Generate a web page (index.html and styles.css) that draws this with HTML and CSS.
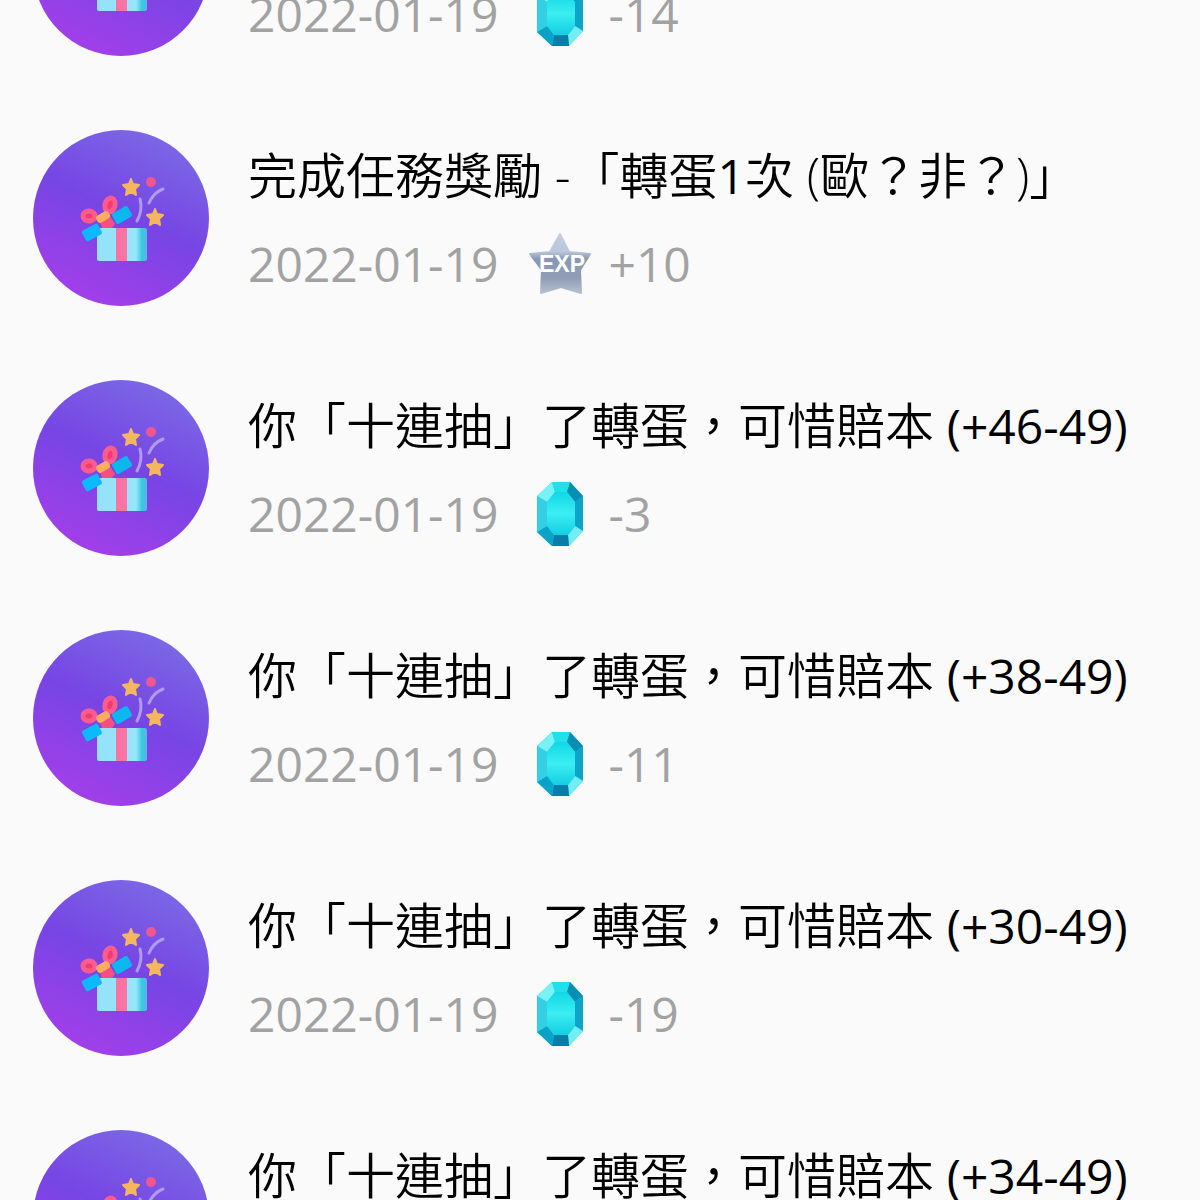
FILE: index.html
```html
<!DOCTYPE html>
<html lang="zh-Hant">
<head>
<meta charset="utf-8">
<meta name="viewport" content="width=device-width, initial-scale=1">
<title>轉蛋紀錄</title>
<link rel="stylesheet" href="styles.css">
</head>
<body>
<svg class="defs" aria-hidden="true">
  <defs>
    <linearGradient id="box-fill" x1="0" x2="1" y1="0" y2="0">
      <stop offset="0" stop-color="#93e2fb"/><stop offset=".78" stop-color="#99e5fb"/><stop offset=".9" stop-color="#35c8de"/><stop offset="1" stop-color="#5bb5ee"/>
    </linearGradient>
    <linearGradient id="exp-fill" x1="0" x2="0" y1="0" y2="1">
      <stop offset="0" stop-color="#c3cee0"/><stop offset=".3" stop-color="#bac7da"/><stop offset=".42" stop-color="#8998b2"/><stop offset=".75" stop-color="#909db4"/><stop offset="1" stop-color="#b4bfd0"/>
    </linearGradient>
    <linearGradient id="gem-fill" x1="0" x2="0" y1="0" y2="1">
      <stop offset="0" stop-color="#10d8e6"/><stop offset=".5" stop-color="#3beef2"/><stop offset="1" stop-color="#14cfe2"/>
    </linearGradient>
    <symbol id="gift" viewBox="0 0 176 176">
      <rect x="64" y="98" width="50" height="33" rx="2" fill="url(#box-fill)"/>
      <rect x="83" y="98" width="11" height="33" fill="#fb73a3"/>
      <rect x="-8" y="-6" width="18" height="12" rx="2" transform="translate(58 103) rotate(-28)" fill="#0cb9fb"/>
      <rect x="-9" y="-6" width="18" height="12" rx="2" transform="translate(89 85) rotate(-30)" fill="#0bb8ee"/>
      <path d="M67 92 77 86 82 94 79 98H69Z" fill="#f64f83"/>
      <ellipse cx="56" cy="86" rx="6" ry="5" fill="#f03a72" stroke="#ff5c8d" stroke-width="5"/>
      <ellipse cx="77" cy="75" rx="5" ry="7" fill="#f03a72" stroke="#ff5c8d" stroke-width="5" transform="rotate(15 77 75)"/>
      <rect x="-7" y="-4" width="14" height="8" rx="3" transform="translate(70 87) rotate(-30)" fill="#ffac60"/>
      <path id="spark" d="m98 49 2 5 6 1-4 4 1 6-5-3-5 3 1-6-4-4 6-1Z" fill="#f5b75e" stroke="#f5b75e" stroke-width="2" stroke-linejoin="round"/>
      <use href="#spark" x="24" y="30"/>
      <circle cx="118" cy="52" r="5" fill="#ef5790"/>
      <path d="M107 69Q110 80 104 91M116 73Q120 63 130 59" fill="none" stroke="#b19bf0" stroke-width="3" stroke-linecap="round"/>
    </symbol>
    <symbol id="exp" viewBox="0 0 64 64">
      <path d="m32 2 9 18 21 2-10 16 1 23-20-6-20 6 1-23L2 22l20-2Z" fill="url(#exp-fill)" stroke="url(#exp-fill)" stroke-width="2" stroke-linejoin="round"/>
      <text x="34" y="40" class="exp-label">EXP</text>
    </symbol>
    <symbol id="gem" viewBox="0 0 64 64">
      <path d="M24 0h18l13 14v35L41 64H24L9 50V14Z" fill="#20c8df"/>
      <path d="M24 0 9 14l10 6 8-10Z" fill="#79f2f7"/>
      <path d="M24 0h18l-3 10H27Z" fill="#22e0e9"/>
      <path d="m42 0 13 14-8 6-8-10Z" fill="#078fb3"/>
      <path d="M55 14v35l-8-5V20Z" fill="#0ca5c9"/>
      <path d="m55 49-14 15-1-11 7-9Z" fill="#72edf4"/>
      <path d="M41 64H24l2-11h14Z" fill="#087daa"/>
      <path d="M24 64 9 50l10-6 7 9Z" fill="#0aa2c8"/>
      <path d="M9 50V14l10 6v24Z" fill="#35cfe5"/>
      <path d="M27 10h12l8 10v24l-7 9H26l-7-9V20Z" fill="url(#gem-fill)"/>
    </symbol>
  </defs>
</svg>
<main>
  <ul class="history">
    <li class="entry">
      <span class="avatar"><svg class="gift"><use href="#gift"/></svg></span>
      <div class="body">
        <p class="title">你「十連抽」了轉蛋，可惜賠本 <span class="score">(+35-49)</span></p>
        <p class="meta"><time datetime="2022-01-19">2022-01-19</time><svg class="icon"><use href="#gem"/></svg><span>-14</span></p>
      </div>
    </li>
    <li class="entry">
      <span class="avatar"><svg class="gift"><use href="#gift"/></svg></span>
      <div class="body">
        <p class="title">完成任務獎勵 -「轉蛋<span class="score">1</span>次 (歐？非？)」</p>
        <p class="meta"><time datetime="2022-01-19">2022-01-19</time><svg class="icon"><use href="#exp"/></svg><span>+10</span></p>
      </div>
    </li>
    <li class="entry">
      <span class="avatar"><svg class="gift"><use href="#gift"/></svg></span>
      <div class="body">
        <p class="title">你「十連抽」了轉蛋，可惜賠本 <span class="score">(+46-49)</span></p>
        <p class="meta"><time datetime="2022-01-19">2022-01-19</time><svg class="icon"><use href="#gem"/></svg><span>-3</span></p>
      </div>
    </li>
    <li class="entry">
      <span class="avatar"><svg class="gift"><use href="#gift"/></svg></span>
      <div class="body">
        <p class="title">你「十連抽」了轉蛋，可惜賠本 <span class="score">(+38-49)</span></p>
        <p class="meta"><time datetime="2022-01-19">2022-01-19</time><svg class="icon"><use href="#gem"/></svg><span>-11</span></p>
      </div>
    </li>
    <li class="entry">
      <span class="avatar"><svg class="gift"><use href="#gift"/></svg></span>
      <div class="body">
        <p class="title">你「十連抽」了轉蛋，可惜賠本 <span class="score">(+30-49)</span></p>
        <p class="meta"><time datetime="2022-01-19">2022-01-19</time><svg class="icon"><use href="#gem"/></svg><span>-19</span></p>
      </div>
    </li>
    <li class="entry">
      <span class="avatar"><svg class="gift"><use href="#gift"/></svg></span>
      <div class="body">
        <p class="title">你「十連抽」了轉蛋，可惜賠本 <span class="score">(+34-49)</span></p>
        <p class="meta"><time datetime="2022-01-19">2022-01-19</time><svg class="icon"><use href="#gem"/></svg><span>-15</span></p>
      </div>
    </li>
  </ul>
</main>
</body>
</html>
```
FILE: styles.css
```css
* {
  box-sizing: border-box;
}

body {
  margin: 0;
  background: #fafafa;
  color: #000;
  font-family: "Open Sans", "Noto Sans CJK TC", sans-serif;
  font-weight: 350;
}

main {
  height: 100vh;
  overflow: hidden;
}

.defs {
  display: block;
  width: 0;
  height: 0;
}

/* The list is scrolled part of the way through its first entry. */
.history {
  display: flex;
  flex-direction: column;
  gap: 74px;
  margin: -120px 0 0;
  padding: 0 33px;
  list-style: none;
}

.entry {
  display: flex;
  gap: 39px;
}

.avatar {
  flex: none;
  width: 176px;
  height: 176px;
  border-radius: 50%;
  background: linear-gradient(205deg, #7b6be5 8%, #7745e4 48%, #a63eea 92%);
}

.gift {
  display: block;
  width: 100%;
  height: 100%;
}

.body {
  display: flex;
  flex-direction: column;
  gap: 8px;
  padding-top: 5px;
}

.title,
.meta {
  margin: 0;
  line-height: 80px;
  white-space: nowrap;
}

.title {
  font-size: 49px;
}

.score {
  font-size: 48px;
  font-weight: 400;
}

.meta {
  display: flex;
  align-items: center;
  color: #a2a2a2;
  font-size: 48px;
  font-weight: 400;
}

.icon {
  width: 64px;
  height: 64px;
  margin: 0 16px 0 30px;
}

.exp-label {
  fill: #fff;
  font: bold 23px "Liberation Sans", sans-serif;
  text-anchor: middle;
}
```
